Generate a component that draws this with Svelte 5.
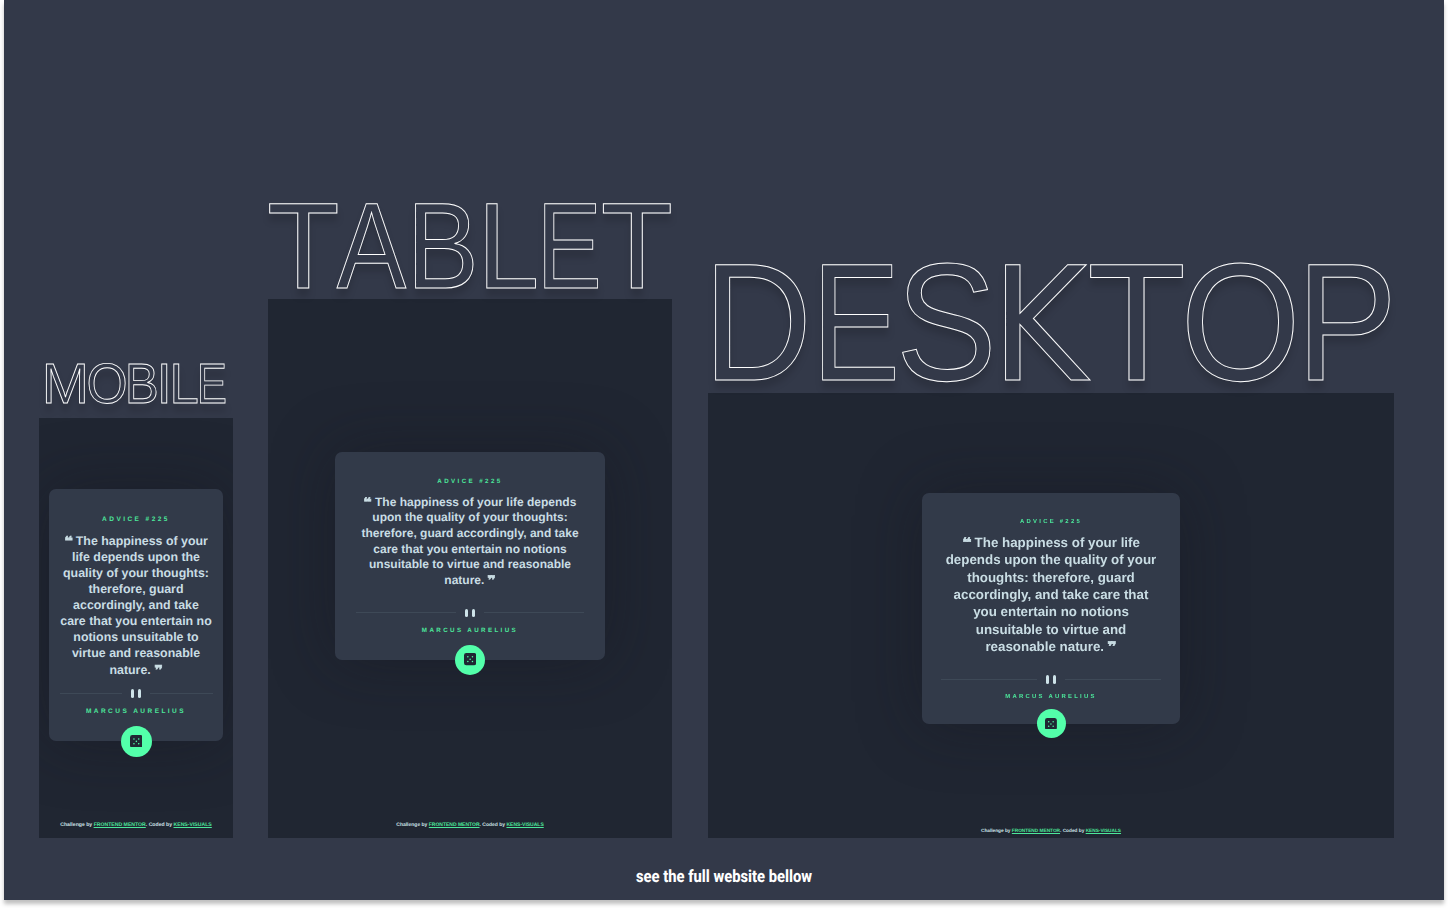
<script>
  // Each letter: character, left edge, horizontal scale
  const devices = [
    {
      id: 'mobile', w: 194, h: 48, size: 56.7, base: 43.8,
      letters: [['M', 46.5, 1.0], ['O', 89, 0.935], ['B', 129, 0.9], ['I', 161.8, 0.95], ['L', 173.8, 0.93], ['E', 200.5, 0.8]], left: 39,
      lines: ['❝ The happiness of your', 'life depends upon the', 'quality of your thoughts:', 'therefore, guard', 'accordingly, and take', 'care that you entertain no', 'notions unsuitable to', 'virtue and reasonable', 'nature. ❞']
    },
    {
      id: 'tablet', w: 404, h: 100, size: 122.5, base: 88.8,
      letters: [['T', 269.5, 0.97], ['A', 337, 0.85], ['B', 415.5, 0.88], ['L', 486.8, 0.9], ['E', 544.7, 0.795], ['T', 603.3, 0.965]], left: 268,
      lines: ['❝ The happiness of your life depends', 'upon the quality of your thoughts:', 'therefore, guard accordingly, and take', 'care that you entertain no notions', 'unsuitable to virtue and reasonable', 'nature. ❞']
    },
    {
      id: 'desktop', w: 686, h: 140, size: 167.6, base: 127.4,
      letters: [['D', 715.5, 0.898], ['E', 822.5, 0.79], ['S', 902.7, 0.905], ['K', 1005.5, 0.922], ['T', 1090.5, 0.968], ['O', 1187.8, 0.922], ['P', 1308.8, 0.9]], left: 708,
      lines: ['❝ The happiness of your life', 'depends upon the quality of your', 'thoughts: therefore, guard', 'accordingly, and take care that', 'you entertain no notions', 'unsuitable to virtue and', 'reasonable nature. ❞']
    }
  ];
  const bearing = { M: 0.082, O: 0.047, B: 0.082, I: 0.093, L: 0.082, E: 0.082, T: 0.021, A: 0.002, D: 0.082, S: 0.045, K: 0.093, P: 0.082 };
</script>

<main>
  <div class="devices">
    {#each devices as d}
      <section class={d.id}>
        <svg class="title" width={d.w} height={d.h} aria-label={d.id}>
          {#each d.letters as [ch, x, sx]}
            <text class:angular={ch === 'K'} transform="translate({x - d.left - bearing[ch] * d.size * sx} {d.base}) scale({sx} 1)" font-size={ch === 'K' ? d.size * 0.944 : d.size}>{ch}</text>
          {/each}
        </svg>
        <div class="screen">
          <article>
            <p class="label advice">ADVICE #225</p>
            <blockquote>
              {#each d.lines as line}
                <span>{#if line.startsWith('❝')}<i>❝</i>{line.slice(1)}{:else if line.endsWith('❞')}{line.slice(0, -1)}<i>❞</i>{:else}{line}{/if}</span>
              {/each}
            </blockquote>
            <div class="divider"><hr /><b></b><b></b><hr /></div>
            <p class="label author">MARCUS AURELIUS</p>
            <button aria-label="New advice">
              <svg viewBox="0 0 24 24"><path d="M20 0H4.5A4.5 4.5 0 0 0 0 4.5v15A4.5 4.5 0 0 0 4.5 24h15a4.5 4.5 0 0 0 4.5-4.5v-15A4.5 4.500 0 0 0 20 0ZM7.500 18a1.500 1.500 0 1 1 0-3 1.500 1.500 0 0 1 0 3Zm0-9a1.500 1.500 0 1 1 0-3 1.500 1.500 0 0 1 0 3Zm4.500 4.500a1.500 1.500 0 1 1 0-3 1.500 1.500 0 0 1 0 3Zm4.500 4.500a1.500 1.500 0 1 1 0-3 1.500 1.500 0 0 1 0 3Zm0-9a1.500 1.500 0 1 1 0-3 1.500 1.500 0 0 1 0 3Z" /></svg>
            </button>
          </article>
          <footer>Challenge by <u>FRONTEND MENTOR</u>. Coded by <u>KENS-VISUALS</u></footer>
        </div>
      </section>
    {/each}
  </div>
  <svg class="caption" width="180" height="26">
    <text x="2" y="18" textLength="176" lengthAdjust="spacingAndGlyphs">see the full website bellow</text>
  </svg>
</main>

<style>
  :global(body) { background: #fff; height: 908px; overflow: hidden; }
  main {
    box-sizing: border-box;
    width: 1440px;
    height: 900px;
    margin: 0 4px;
    background: #333949;
    box-shadow: 0 4px 4px rgba(0, 0, 0, 0.25);
    display: flex;
    flex-direction: column;
    align-items: center;
    font-family: "Liberation Sans", Arial, sans-serif;
    text-rendering: geometricPrecision;
  }
  .devices {
    box-sizing: border-box;
    width: 100%;
    height: 838px;
    padding: 0 50px 0 35px;
    display: flex;
    align-items: flex-end;
    gap: 35px;
    flex: none;
  }
  .desktop { margin-left: 1px; }
  section { display: flex; flex-direction: column; flex: none; width: var(--w); }
  .title { display: block; overflow: visible; filter: drop-shadow(0 8px 3px rgba(0, 0, 0, 0.13)); }
  .title text {
    font-family: "Liberation Sans", Arial, sans-serif;
    fill: #333949;
    stroke: #fff;
    stroke-width: 1px;
  }
  .title .angular { font-family: "DejaVu Sans", sans-serif; }
  .mobile .title { margin-bottom: 11px; }
  .mobile .title text { stroke-width: 0.9px; }
  .mobile {
    --w: 194px; --h: 420px; --top: 70.500px; --cw: 174px; --ch: 252.500px;
    --label: 6.500px; --ls: 2.450px; --labelTop: 27px; --quoteTop: 9.300px; --fs: 12.400px; --lh: 16.100px;
    --divTop: 11.500px; --authorTop: 9.800px; --btn: 31px; --side: 10.500px; --foot: 5.150px; --footBottom: 8px;
  }
  .tablet {
    --w: 404px; --h: 539px; --top: 153px; --cw: 269.500px; --ch: 207.500px;
    --label: 6.200px; --ls: 2.400px; --labelTop: 25.500px; --quoteTop: 9.300px; --fs: 12px; --lh: 15.600px;
    --divTop: 20px; --authorTop: 10px; --btn: 30px; --side: 20.500px; --foot: 5px; --footBottom: 8px;
  }
  .desktop {
    --w: 686px; --h: 445px; --top: 100px; --cw: 257.500px; --ch: 230.500px;
    --label: 5.900px; --ls: 2.280px; --labelTop: 24.500px; --quoteTop: 8.500px; --fs: 13.350px; --lh: 17.350px;
    --divTop: 19.500px; --authorTop: 8.700px; --btn: 29px; --side: 18.500px; --foot: 4.760px; --footBottom: 1px;
  }
  .screen {
    box-sizing: border-box;
    height: var(--h);
    padding-top: var(--top);
    background: #202632;
    overflow: hidden;
    display: flex;
    flex-direction: column;
    align-items: center;
  }
  article {
    box-sizing: border-box;
    flex: none;
    width: var(--cw);
    height: var(--ch);
    padding: var(--labelTop) var(--side) 0;
    border-radius: 7px;
    background: #323a49;
    box-shadow: 0 0 64px rgba(20, 20, 30, 0.4);
    display: flex;
    flex-direction: column;
    position: relative;
  }
  p { margin: 0; }
  .label {
    font-size: var(--label);
    font-weight: 700;
    line-height: 8px;
    letter-spacing: var(--ls);
    text-align: center;
    color: #4ce79b;
    white-space: nowrap;
  }
  blockquote {
    margin: var(--quoteTop) 0 0;
    font-size: var(--fs);
    line-height: var(--lh);
    font-weight: 700;
    color: #c9dde4;
    display: flex;
    flex-direction: column;
    align-items: center;
  }
  blockquote span { white-space: pre; height: var(--lh); }
  i {
    display: inline-block;
    font-family: "DejaVu Sans", sans-serif;
    font-style: normal;
    font-weight: 700;
    line-height: 1;
    -webkit-text-stroke: 0.6px currentColor;
    margin: 0 0.500px;
    transform: scaleX(1.2);
  }
  .divider { margin-top: var(--divTop); display: flex; align-items: center; height: 9px; flex: none; }
  hr { flex: 1; border: 0; margin: 0; height: 1px; background: #3e4957; }
  .divider b { width: 3.300px; height: 8.500px; border-radius: 1.500px; background: #cee3e9; }
  .divider b:nth-of-type(1) { margin: 0 2px 0 8.500px; }
  .divider b:nth-of-type(2) { margin: 0 8.500px 0 2px; }
  .author { margin-top: var(--authorTop); }
  button {
    position: absolute;
    left: calc(50% - var(--btn) / 2);
    bottom: calc(var(--btn) / -2);
    width: var(--btn);
    height: var(--btn);
    padding: 0;
    border: 0;
    border-radius: 50%;
    background: #53ffaa;
    display: flex;
    align-items: center;
    justify-content: center;
  }
  button svg { width: 41%; height: 41%; fill: #202733; }
  footer {
    margin-top: auto;
    margin-bottom: var(--footBottom);
    font-size: var(--foot);
    line-height: 10px;
    font-weight: 700;
    color: #cee3e9;
    white-space: nowrap;
  }
  u { color: #4ce79b; }
  .caption { margin-top: 26px; flex: none; overflow: visible; }
  .caption text { font: 800 17px Roboto, sans-serif; fill: #fff; }
</style>
